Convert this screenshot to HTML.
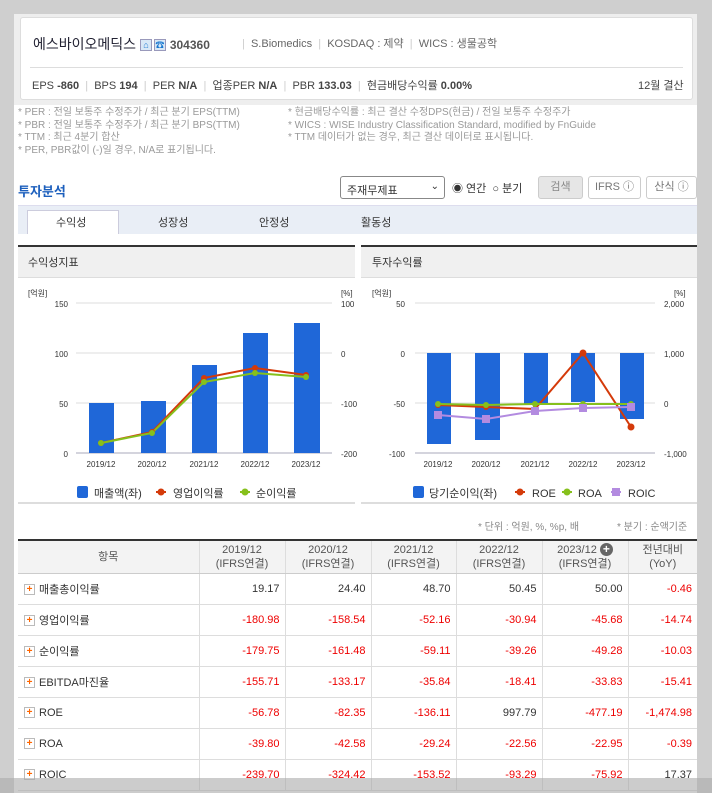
<!DOCTYPE html><html><head><meta charset="utf-8"><style>
*{margin:0;padding:0;box-sizing:border-box}
body{width:712px;height:793px;background:#cfcfcf;font-family:"Liberation Sans","Noto Sans CJK KR",sans-serif;position:relative;overflow:hidden;font-size:11px;color:#333}
.a{position:absolute;white-space:nowrap}
#main{position:absolute;left:14px;top:14px;width:683px;height:779px;background:#fff}
#hdrbg{position:absolute;left:14px;top:14px;width:683px;height:91px;background:#eeeeee}
#hdr{position:absolute;left:20px;top:17px;width:673px;height:83px;background:#fff;border:1px solid #ddd;border-radius:3px}
.note{color:#999;font-size:10px}
.sep{color:#ccc}
table{border-collapse:collapse;position:absolute;left:18px;top:539px;width:679px;border-top:2px solid #333;font-size:11px}
td,th{border-bottom:1px solid #ddd;border-left:1px solid #ddd;height:31px;text-align:right;padding-right:5px;font-weight:normal}
th{background:#f3f3f3;text-align:center;padding:0;height:33px;color:#555;line-height:14px;border-bottom:1px solid #ccc}
td:first-child,th:first-child{border-left:none}
td:first-child{text-align:left;padding-left:6px;color:#333}
.r{color:#e00}
.pl{display:inline-block;width:11px;height:11px;border:1px solid #bbb;color:#f60;font-size:10px;line-height:9px;text-align:center;font-weight:bold;vertical-align:middle;margin-right:4px}
.ic{display:inline-block;width:12px;height:12px;border:1px solid #99b;background:#d8e8f6;color:#1a78d0;font-size:9px;line-height:10px;text-align:center;vertical-align:1px}
</style></head><body>
<div id="main"></div>
<div id="hdrbg"></div>
<div id="hdr"></div>
<div class="a" style="left:33px;top:34px;font-size:14px;color:#223">에스바이오메딕스 <span class="ic">⌂</span><span class="ic" style="margin-left:2px">☎</span> <b style="font-size:12px;color:#555">304360</b></div>
<div class="a" style="left:242px;top:35px;font-size:11px;color:#666"><span class="sep">|</span>&nbsp; S.Biomedics &nbsp;<span class="sep">|</span>&nbsp; KOSDAQ : 제약 &nbsp;<span class="sep">|</span>&nbsp; WICS : 생물공학</div>
<div class="a" style="left:30px;top:67px;width:653px;height:1px;background:#ddd"></div>
<div class="a" style="left:32px;top:77px;font-size:11px;color:#444">EPS <b>-860</b> &nbsp;<span class="sep">|</span>&nbsp; BPS <b>194</b> &nbsp;<span class="sep">|</span>&nbsp; PER <b>N/A</b> &nbsp;<span class="sep">|</span>&nbsp; 업종PER <b>N/A</b> &nbsp;<span class="sep">|</span>&nbsp; PBR <b>133.03</b> &nbsp;<span class="sep">|</span>&nbsp; 현금배당수익률 <b>0.00%</b></div>
<div class="a" style="left:638px;top:77px;font-size:11px;color:#444">12월 결산</div>
<div class="a note" style="left:18px;top:107px;line-height:12.7px">* PER : 전일 보통주 수정주가 / 최근 분기 EPS(TTM)<br>* PBR : 전일 보통주 수정주가 / 최근 분기 BPS(TTM)<br>* TTM : 최근 4분기 합산<br>* PER, PBR값이 (-)일 경우, N/A로 표기됩니다.</div>
<div class="a note" style="left:288px;top:107px;line-height:12.7px">* 현금배당수익률 : 최근 결산 수정DPS(현금) / 전일 보통주 수정주가<br>* WICS : WISE Industry Classification Standard, modified by FnGuide<br>* TTM 데이터가 없는 경우, 최근 결산 데이터로 표시됩니다.</div>
<div class="a" style="left:18px;top:181px;font-size:13px;font-weight:bold;color:#1c5fbd">투자분석</div>
<div class="a" style="left:340px;top:176px;width:105px;height:23px;border:1px solid #888;border-radius:3px;font-size:11px;padding:5px 6px">주재무제표<span style="position:absolute;right:5px;top:4px;font-size:10px">⌄</span></div>
<div class="a" style="left:452px;top:180px;font-size:11px">◉ 연간 &nbsp;○ 분기</div>
<div class="a" style="left:538px;top:176px;width:45px;height:23px;border:1px solid #ccc;background:#e6e6e6;border-radius:3px;text-align:center;line-height:21px;color:#888">검색</div>
<div class="a" style="left:588px;top:176px;width:53px;height:23px;border:1px solid #ccc;border-radius:3px;text-align:center;line-height:21px;color:#777">IFRS ⓘ</div>
<div class="a" style="left:646px;top:176px;width:51px;height:23px;border:1px solid #ccc;border-radius:3px;text-align:center;line-height:21px;color:#777">산식 ⓘ</div>
<div class="a" style="left:18px;top:205px;width:679px;height:29px;background:#e9eef6;border-top:1px solid #dde"></div>
<div class="a" style="left:27px;top:210px;width:92px;height:24px;background:#fff;border:1px solid #ccd;border-bottom:none"></div>
<div class="a" style="left:56px;top:214px;font-size:11px">수익성</div>
<div class="a" style="left:158px;top:214px;font-size:11px">성장성</div>
<div class="a" style="left:259px;top:214px;font-size:11px">안정성</div>
<div class="a" style="left:361px;top:214px;font-size:11px">활동성</div>

<svg class="a" style="left:0;top:0" width="712" height="540" font-family="Liberation Sans, Noto Sans CJK KR, sans-serif">
<rect x="18" y="245" width="337" height="2" fill="#333"/><rect x="18" y="247" width="337" height="30" fill="#f0f0f0"/><rect x="18" y="277" width="337" height="1" fill="#ddd"/>
<rect x="361" y="245" width="336" height="2" fill="#333"/><rect x="361" y="247" width="336" height="30" fill="#f0f0f0"/><rect x="361" y="277" width="336" height="1" fill="#ddd"/>
<rect x="18" y="502" width="337" height="2" fill="#ddd"/><rect x="361" y="502" width="336" height="2" fill="#ddd"/>
<text x="28" y="266" font-size="11" fill="#333">수익성지표</text><text x="372" y="266" font-size="11" fill="#333">투자수익률</text>
<g font-size="8" fill="#333">
<text x="28" y="296">[억원]</text><text x="341" y="296">[%]</text>
<text x="68" y="307" text-anchor="end">150</text><text x="68" y="357" text-anchor="end">100</text><text x="68" y="407" text-anchor="end">50</text><text x="68" y="457" text-anchor="end">0</text>
<text x="341" y="307">100</text><text x="341" y="357">0</text><text x="341" y="407">-100</text><text x="341" y="457">-200</text>
<text x="101" y="467" text-anchor="middle">2019/12</text><text x="152" y="467" text-anchor="middle">2020/12</text><text x="204" y="467" text-anchor="middle">2021/12</text><text x="255" y="467" text-anchor="middle">2022/12</text><text x="306" y="467" text-anchor="middle">2023/12</text>
</g>
<g stroke="#ddd"><line x1="76" y1="303" x2="332" y2="303"/><line x1="76" y1="353" x2="332" y2="353"/><line x1="76" y1="403" x2="332" y2="403"/></g>
<line x1="76" y1="453" x2="332" y2="453" stroke="#aab"/>
<g fill="#1f67d8"><rect x="89" y="403" width="25" height="50"/><rect x="141" y="401" width="25" height="52"/><rect x="192" y="365" width="25" height="88"/><rect x="243" y="333" width="25" height="120"/><rect x="294" y="323" width="26" height="130"/></g>
<polyline points="101,443 152,432 204,378 255,368 306,375" fill="none" stroke="#d43a0a" stroke-width="2"/>
<polyline points="101,443 152,433 204,382 255,373 306,377" fill="none" stroke="#86c01c" stroke-width="2"/>
<g fill="#d43a0a"><circle cx="101" cy="443" r="3"/><circle cx="152" cy="432" r="3"/><circle cx="204" cy="378" r="3"/><circle cx="255" cy="368" r="3"/><circle cx="306" cy="375" r="3"/></g>
<g fill="#86c01c"><circle cx="101" cy="443" r="3"/><circle cx="152" cy="433" r="3"/><circle cx="204" cy="382" r="3"/><circle cx="255" cy="373" r="3"/><circle cx="306" cy="377" r="3"/></g>
<g font-size="11" fill="#333">
<rect x="77" y="486" width="11" height="12" rx="2" fill="#1f67d8"/><text x="94" y="497">매출액(좌)</text>
<line x1="156" y1="492" x2="166" y2="492" stroke="#d43a0a" stroke-width="2"/><circle cx="161" cy="492" r="3.5" fill="#d43a0a"/><text x="173" y="497">영업이익률</text>
<line x1="240" y1="492" x2="250" y2="492" stroke="#86c01c" stroke-width="2"/><circle cx="245" cy="492" r="3.5" fill="#86c01c"/><text x="256" y="497">순이익률</text>
</g>
<g font-size="8" fill="#333">
<text x="372" y="296">[억원]</text><text x="674" y="296">[%]</text>
<text x="405" y="307" text-anchor="end">50</text><text x="405" y="357" text-anchor="end">0</text><text x="405" y="407" text-anchor="end">-50</text><text x="405" y="457" text-anchor="end">-100</text>
<text x="664" y="307">2,000</text><text x="664" y="357">1,000</text><text x="664" y="407">0</text><text x="664" y="457">-1,000</text>
<text x="438" y="467" text-anchor="middle">2019/12</text><text x="486" y="467" text-anchor="middle">2020/12</text><text x="535" y="467" text-anchor="middle">2021/12</text><text x="583" y="467" text-anchor="middle">2022/12</text><text x="631" y="467" text-anchor="middle">2023/12</text>
</g>
<g stroke="#ddd"><line x1="415" y1="303" x2="655" y2="303"/><line x1="415" y1="353" x2="655" y2="353"/><line x1="415" y1="403" x2="655" y2="403"/></g>
<line x1="415" y1="453" x2="655" y2="453" stroke="#aab"/>
<g fill="#1f67d8"><rect x="427" y="353" width="24" height="91"/><rect x="475" y="353" width="25" height="87"/><rect x="524" y="353" width="24" height="52"/><rect x="571" y="353" width="24" height="49"/><rect x="620" y="353" width="24" height="66"/></g>
<polyline points="438,405 486,407 535,409 583,353 631,427" fill="none" stroke="#d43a0a" stroke-width="2"/>
<polyline points="438,404 486,405 535,404 583,404 631,404" fill="none" stroke="#86c01c" stroke-width="2"/>
<polyline points="438,415 486,419 535,411 583,408 631,407" fill="none" stroke="#b38be0" stroke-width="2"/>
<g fill="#d43a0a"><circle cx="438" cy="405" r="3"/><circle cx="486" cy="407" r="3"/><circle cx="535" cy="409" r="3"/><circle cx="583" cy="353" r="3.5"/><circle cx="631" cy="427" r="3.5"/></g>
<g fill="#86c01c"><circle cx="438" cy="404" r="3"/><circle cx="486" cy="405" r="3"/><circle cx="535" cy="404" r="3"/><circle cx="583" cy="404" r="3"/><circle cx="631" cy="404" r="3"/></g>
<g fill="#b38be0"><rect x="434" y="411" width="8" height="8"/><rect x="482" y="415" width="8" height="8"/><rect x="531" y="407" width="8" height="8"/><rect x="579" y="404" width="8" height="8"/><rect x="627" y="403" width="8" height="8"/></g>
<g font-size="11" fill="#333">
<rect x="413" y="486" width="11" height="12" rx="2" fill="#1f67d8"/><text x="429" y="497">당기순이익(좌)</text>
<line x1="515" y1="492" x2="525" y2="492" stroke="#d43a0a" stroke-width="2"/><circle cx="520" cy="492" r="3.5" fill="#d43a0a"/><text x="532" y="497">ROE</text>
<line x1="562" y1="492" x2="572" y2="492" stroke="#86c01c" stroke-width="2"/><circle cx="567" cy="492" r="3.5" fill="#86c01c"/><text x="578" y="497">ROA</text>
<line x1="611" y1="492" x2="621" y2="492" stroke="#b38be0" stroke-width="2"/><rect x="612" y="488" width="8" height="8" fill="#b38be0"/><text x="628" y="497">ROIC</text>
</g>
<text x="478" y="530" font-size="10" fill="#888">* 단위 : 억원, %, %p, 배</text><text x="617" y="530" font-size="10" fill="#888">* 분기 : 순액기준</text>
</svg>

<table>
<colgroup><col style="width:181px"><col style="width:86px"><col style="width:86px"><col style="width:85px"><col style="width:86px"><col style="width:86px"><col style="width:69px"></colgroup>
<tr><th>항목</th><th>2019/12<br>(IFRS연결)</th><th>2020/12<br>(IFRS연결)</th><th>2021/12<br>(IFRS연결)</th><th>2022/12<br>(IFRS연결)</th><th>2023/12 <span style="display:inline-block;width:13px;height:13px;border-radius:50%;background:#666;color:#fff;font-size:12px;line-height:13px;font-weight:bold">+</span><br>(IFRS연결)</th><th>전년대비<br>(YoY)</th></tr>
<tr><td><span class="pl">+</span>매출총이익률</td><td>19.17</td><td>24.40</td><td>48.70</td><td>50.45</td><td>50.00</td><td class="r">-0.46</td></tr>
<tr><td><span class="pl">+</span>영업이익률</td><td class="r">-180.98</td><td class="r">-158.54</td><td class="r">-52.16</td><td class="r">-30.94</td><td class="r">-45.68</td><td class="r">-14.74</td></tr>
<tr><td><span class="pl">+</span>순이익률</td><td class="r">-179.75</td><td class="r">-161.48</td><td class="r">-59.11</td><td class="r">-39.26</td><td class="r">-49.28</td><td class="r">-10.03</td></tr>
<tr><td><span class="pl">+</span>EBITDA마진율</td><td class="r">-155.71</td><td class="r">-133.17</td><td class="r">-35.84</td><td class="r">-18.41</td><td class="r">-33.83</td><td class="r">-15.41</td></tr>
<tr><td><span class="pl">+</span>ROE</td><td class="r">-56.78</td><td class="r">-82.35</td><td class="r">-136.11</td><td>997.79</td><td class="r">-477.19</td><td class="r">-1,474.98</td></tr>
<tr><td><span class="pl">+</span>ROA</td><td class="r">-39.80</td><td class="r">-42.58</td><td class="r">-29.24</td><td class="r">-22.56</td><td class="r">-22.95</td><td class="r">-0.39</td></tr>
<tr><td><span class="pl">+</span>ROIC</td><td class="r">-239.70</td><td class="r">-324.42</td><td class="r">-153.52</td><td class="r">-93.29</td><td class="r">-75.92</td><td>17.37</td></tr>
</table>
<div class="a" style="left:0;top:778px;width:712px;height:15px;background:rgba(170,170,170,0.6)"></div>
</body></html>
